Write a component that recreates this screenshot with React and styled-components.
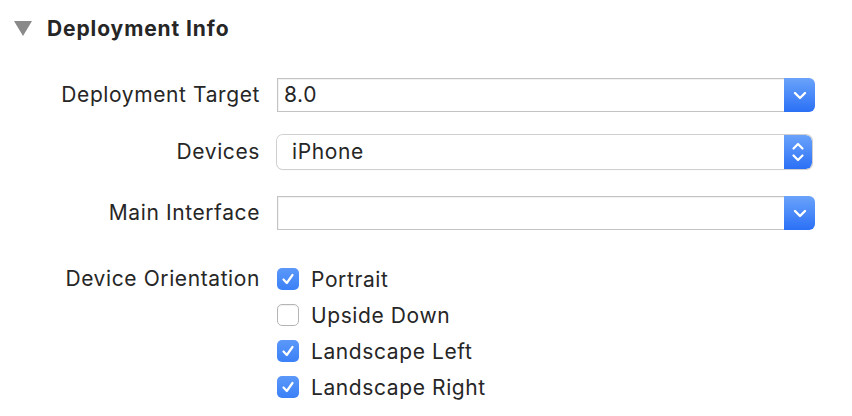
import React from "react";
import styled, { createGlobalStyle } from "styled-components";

const Global = createGlobalStyle`
  html, body { margin: 0; padding: 0; background: #ffffff; }
  body { font-family: Inter, "Liberation Sans", Arial, sans-serif; color: #262626; }
`;

const Page = styled.div`
  width: 852px;
  height: 416px;
  box-sizing: border-box;
  padding: 16px 0 0 14px;
  overflow: hidden;
`;

const Header = styled.div`
  display: flex;
  align-items: center;
  height: 24px;
  gap: 15px;
`;

const Title = styled.div`
  font-size: 21px;
  font-weight: 700;
  letter-spacing: 0.9px;
  color: #262626;
`;

const Form = styled.div`
  display: flex;
  flex-direction: column;
  margin-left: -14px;
`;

const Row = styled.div`
  display: grid;
  grid-template-columns: 259px 539px;
  column-gap: 18px;
  align-items: ${(p) => (p.$top ? "start" : "center")};
  margin-top: ${(p) => p.$mt}px;
`;

const Text = `
  font-size: 21px;
  letter-spacing: 0.6px;
`;

const Label = styled.div`
  ${Text}
  text-align: right;
  line-height: ${(p) => p.$lh || 34}px;
  white-space: nowrap;
  color: #262626;
  margin-right: -1px;
`;

const Combo = styled.div`
  display: flex;
  height: 34px;
  width: 538px;
`;

const ComboField = styled.div`
  ${Text}
  flex: 1;
  box-sizing: border-box;
  border: 1px solid #c3c3c3;
  border-right: none;
  box-shadow: inset 0 1px 0 #f2f2f2, inset 1px 0 0 #f4f4f4;
  line-height: 32px;
  padding-left: 6px;
  background: #fff;
`;

const BlueButton = styled.div`
  width: ${(p) => p.$w}px;
  display: flex;
  align-items: center;
  justify-content: center;
  background: linear-gradient(#6aa3fb, #2b70f6);
  border-radius: 0 6px 6px 0;
`;

const Popup = styled.div`
  display: flex;
  height: 34px;
  width: 535px;
  border-radius: 6px;
  box-shadow: 0 0 0 1px #cfcfcf, 0 1px 1px rgba(0, 0, 0, 0.12);
  overflow: hidden;
`;

const PopupText = styled.div`
  ${Text}
  flex: 1;
  line-height: 34px;
  padding-left: 15px;
  background: #fff;
`;

const Checks = styled.div`
  display: flex;
  flex-direction: column;
`;

const CheckRow = styled.div`
  ${Text}
  display: flex;
  align-items: center;
  height: 36px;
  gap: 12px;
`;

const Box = styled.div`
  width: 22px;
  height: 22px;
  box-sizing: border-box;
  border-radius: 5px;
  display: flex;
  align-items: center;
  justify-content: center;
  background: ${(p) => (p.$on ? "linear-gradient(#5b98f9, #3a80f7)" : "#fff")};
  border: ${(p) => (p.$on ? "none" : "1px solid #b5b5b5")};
  box-shadow: ${(p) => (p.$on ? "none" : "inset 0 1px 1px rgba(0,0,0,0.06)")};
`;

const Down = () => (
  <svg width="14" height="9" viewBox="0 0 14 9">
    <path d="M2 2 L7 7 L12 2" fill="none" stroke="#fff" strokeWidth="2.4" strokeLinecap="round" strokeLinejoin="round" />
  </svg>
);

const UpDown = () => (
  <svg width="14" height="22" viewBox="0 0 14 22">
    <path d="M2.5 7.5 L7 3 L11.5 7.5" fill="none" stroke="#fff" strokeWidth="2.2" strokeLinecap="round" strokeLinejoin="round" />
    <path d="M2.5 14.5 L7 19 L11.5 14.5" fill="none" stroke="#fff" strokeWidth="2.2" strokeLinecap="round" strokeLinejoin="round" />
  </svg>
);

const Tick = () => (
  <svg width="14" height="12" viewBox="0 0 14 12">
    <path d="M2.5 6.5 L5.8 10 L11.5 2" fill="none" stroke="#fff" strokeWidth="2.2" strokeLinecap="round" strokeLinejoin="round" />
  </svg>
);

const Check = ({ on, children }) => (
  <CheckRow>
    <Box $on={on}>{on && <Tick />}</Box>
    <span>{children}</span>
  </CheckRow>
);

export default function App() {
  return (
    <>
      <Global />
      <Page>
        <Header>
          <svg width="18" height="15" viewBox="0 0 18 15">
            <path d="M0 0 H18 L9 15 Z" fill="#8a8a8a" />
          </svg>
          <Title>Deployment Info</Title>
        </Header>
        <Form>
          <Row $mt={38}>
            <Label>Deployment Target</Label>
            <Combo>
              <ComboField>8.0</ComboField>
              <BlueButton $w={31}><Down /></BlueButton>
            </Combo>
          </Row>
          <Row $mt={23}>
            <Label>Devices</Label>
            <Popup>
              <PopupText>iPhone</PopupText>
              <BlueButton $w={28}><UpDown /></BlueButton>
            </Popup>
          </Row>
          <Row $mt={27}>
            <Label>Main Interface</Label>
            <Combo>
              <ComboField />
              <BlueButton $w={31}><Down /></BlueButton>
            </Combo>
          </Row>
          <Row $mt={31} $top>
            <Label $lh={36}>Device Orientation</Label>
            <Checks>
              <Check on>Portrait</Check>
              <Check>Upside Down</Check>
              <Check on>Landscape Left</Check>
              <Check on>Landscape Right</Check>
            </Checks>
          </Row>
        </Form>
      </Page>
    </>
  );
}
